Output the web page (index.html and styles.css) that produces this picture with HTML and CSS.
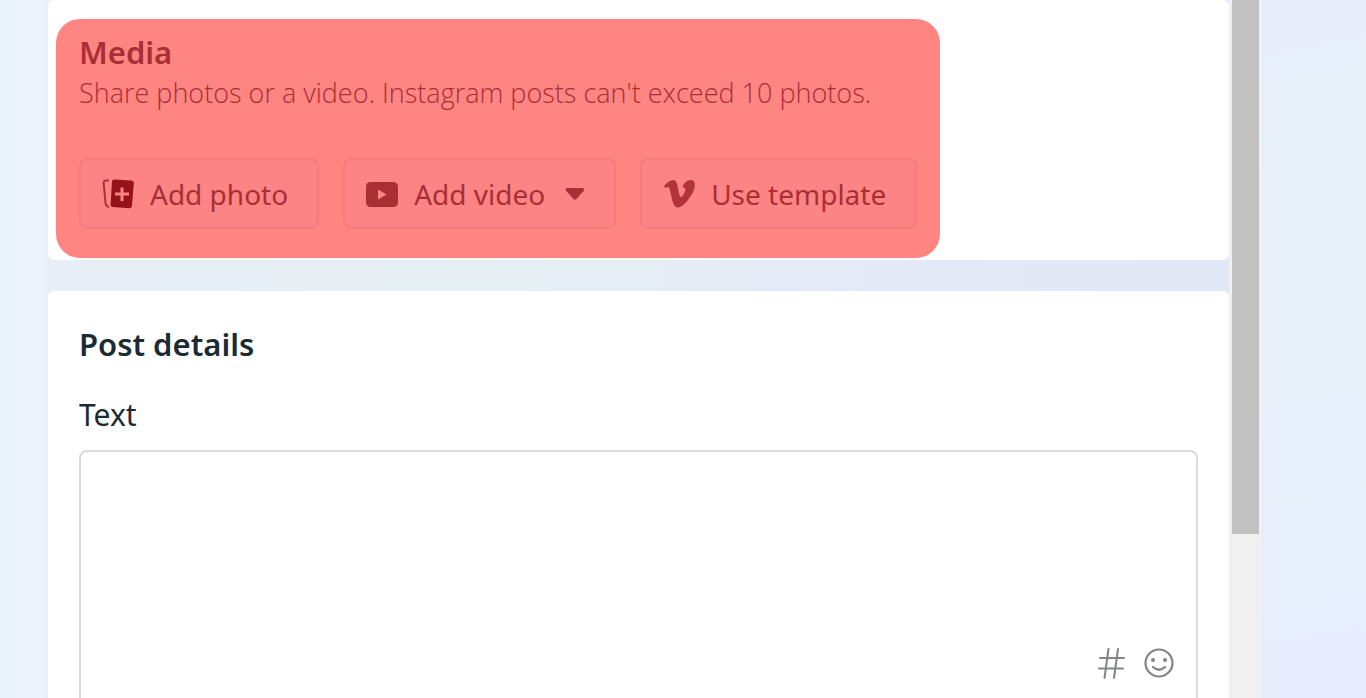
FILE: index.html
```html
<!DOCTYPE html>
<html lang="en">
<head>
<meta charset="utf-8">
<meta name="viewport" content="width=device-width, initial-scale=1">
<title>Create post</title>
<link rel="stylesheet" href="styles.css">
</head>
<body>
<div class="page">
  <main class="composer">
    <section class="card media-card" aria-labelledby="media-title">
      <div class="highlight">
        <h2 class="title media-title" id="media-title">Media</h2>
        <p class="hint">Share photos or a video. Instagram posts can't exceed 10 photos.</p>
        <div class="actions">
          <button class="action" type="button">
            <svg class="icon icon-photo" viewBox="0 0 32 32" aria-hidden="true">
              <path d="M7 2.500H4Q1.500 2.500 1.700 5L3.500 25Q3.800 28.500 7 29" fill="none" stroke="currentColor" stroke-width="2" opacity=".75"/>
              <path fill="currentColor" fill-rule="evenodd" d="M12 1.500L29 2.500Q32 2.700 31.800 5.500L30 27.500Q29.700 30.300 27 30.200L11 29Q8.400 28.700 8.600 26L10 3.500Q10.200 1.500 12 1.500ZM18.500 9.500V14.500H13V17.500H18.500V23H21.500V17.500H27V14.500H21.500V9.500Z"/>
            </svg>
            <span>Add photo</span>
          </button>
          <button class="action" type="button">
            <svg class="icon" viewBox="0 0 32 32" aria-hidden="true">
              <path fill="currentColor" fill-rule="evenodd" d="M5 4H27Q32 4 32 9V24Q32 29 27 29H5Q0 29 0 24V9Q0 4 5 4ZM12 11.500V21.500L20.500 16.500Z"/>
            </svg>
            <span>Add video</span>
            <svg class="caret" viewBox="0 0 20 12" aria-hidden="true">
              <path fill="currentColor" d="M2 0H18Q20 .5 19 2.500L11.500 11Q10 12.500 8.500 11L1 2.500Q0 .5 2 0Z"/>
            </svg>
          </button>
          <button class="action" type="button">
            <svg class="icon icon-template" viewBox="0 0 32 32" aria-hidden="true">
              <path fill="currentColor" d="M1 8Q5 3 10 2C14 1.500 14.500 7 15.500 13Q16.500 19 17.800 19C19.500 19 22.500 14 22.500 11.500Q22.500 9 19.500 9.500C20.500 4.500 24.500 1.500 28.500 2C32.500 2.500 32.500 8 30.500 13C28 19 20.500 29.500 15 29.500C10.500 29.500 9.500 23.500 8.500 19C7 12 6.500 9 5 9Q4 9 2.300 10Z"/>
            </svg>
            <span>Use template</span>
          </button>
        </div>
      </div>
    </section>
    <section class="card details-card" aria-labelledby="details-title">
      <h2 class="title" id="details-title">Post details</h2>
      <label class="label" for="post-text">Text</label>
      <div class="editor">
        <textarea class="editor-input" id="post-text"></textarea>
        <div class="editor-tools">
          <button class="tool" type="button" aria-label="Add hashtag">
            <svg class="icon" viewBox="0 0 32 32" fill="none" stroke="currentColor" stroke-width="2" stroke-linecap="round" aria-hidden="true">
              <path d="M12.500 2L8.500 31M22 2L18 31M4 11H28M3 21.500H27"/>
            </svg>
          </button>
          <button class="tool" type="button" aria-label="Add emoji">
            <svg class="icon" viewBox="0 0 32 32" fill="none" stroke="currentColor" stroke-width="2.200" stroke-linecap="round" aria-hidden="true">
              <circle cx="16" cy="16" r="13.500"/>
              <path d="M10 20Q16 25.500 22 20"/>
              <circle cx="10" cy="13" r="2" fill="currentColor" stroke="none"/>
              <circle cx="22" cy="13" r="2" fill="currentColor" stroke="none"/>
            </svg>
          </button>
        </div>
      </div>
    </section>
  </main>
  <div class="scroll-track"><div class="scroll-thumb"></div></div>
  <aside class="gutter"></aside>
</div>
</body>
</html>
```

FILE: styles.css
```css
* {
  box-sizing: border-box;
}

body {
  margin: 0;
  font-family: "Noto Sans", "Open Sans", sans-serif;
  color: #1c2b33;
  background: #e9f0f9;
}

.page {
  display: flex;
  height: 100vh;
  overflow: hidden;
  background: linear-gradient(90deg, #e9f2fc, #edf3fd 40px, #e7eef6 48px, #e6eff4 500px, #e4e9f7 900px, #e1e7f6);
}

.composer {
  flex: 1;
  min-width: 0;
  display: flex;
  flex-direction: column;
  gap: 31px;
  padding-left: 48px;
}

.card {
  background: #fff;
  border-radius: 6px;
}

.media-card {
  padding: 19px 8px 2px;
}

.highlight {
  width: fit-content;
  padding: 15px 23px 29px;
  border-radius: 24px;
  background: #ff8583;
  color: #a92f35;
}

.title {
  margin: 0;
  font-size: 31px;
  line-height: 36px;
  font-weight: 600;
}

.hint {
  margin: 0;
  font-family: "Open Sans", "Noto Sans", sans-serif;
  font-size: 27px;
  line-height: 46px;
  font-weight: 300;
}

.actions {
  display: flex;
  gap: 24px;
  margin-top: 42px;
}

.action {
  display: flex;
  align-items: center;
  gap: 16px;
  height: 71px;
  padding: 0 29px 0 21px;
  border: 2px solid #f67c7c;
  border-radius: 8px;
  background: #fd8484;
  color: inherit;
  font: inherit;
  font-size: 28px;
  white-space: nowrap;
}

.icon {
  display: block;
  flex: none;
  width: 32px;
  height: 32px;
}

.icon-photo {
  color: #951319;
}

.icon-template {
  color: #b23438;
}

.caret {
  width: 20px;
  height: 12px;
  margin-left: 4px;
}

.details-card {
  flex: 1 0 auto;
  padding: 35px 31px;
}

.label {
  display: block;
  margin-top: 35px;
  font-size: 30px;
  line-height: 36px;
}

.editor {
  position: relative;
  margin-top: 17px;
}

.editor-input {
  display: block;
  width: 100%;
  height: 256px;
  padding: 16px;
  border: 2px solid #dadada;
  border-radius: 8px;
  background: #fff;
  font: inherit;
  font-size: 28px;
  resize: none;
}

.editor-tools {
  position: absolute;
  right: 23px;
  bottom: 27px;
  display: flex;
  gap: 15px;
}

.tool {
  padding: 0;
  border: 0;
  background: none;
  color: #828487;
}

.scroll-track {
  width: 32px;
  padding: 0 2px 0 3px;
  background: #f1f0f1;
}

.scroll-thumb {
  height: 534px;
  background: #c1c1c1;
}

.gutter {
  width: 105px;
  background: linear-gradient(170deg, #e7eef9, #e8f1f9 45%, #e7eefc 80%, #e7edfd);
}
```
